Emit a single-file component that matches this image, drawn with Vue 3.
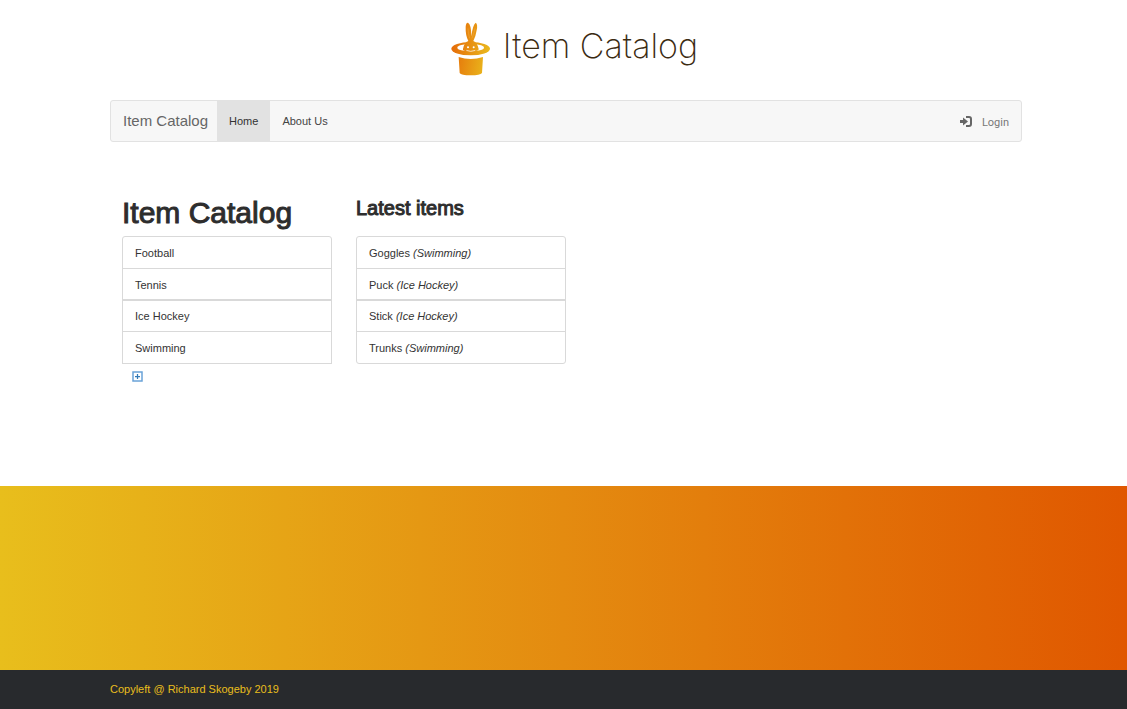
<script setup>
const categories = ['Football', 'Tennis', 'Ice Hockey', 'Swimming']
const latest = [
  { name: 'Goggles', category: 'Swimming' },
  { name: 'Puck', category: 'Ice Hockey' },
  { name: 'Stick', category: 'Ice Hockey' },
  { name: 'Trunks', category: 'Swimming' }
]
</script>

<template>
  <div class="page">
    <header class="masthead">
      <a class="logo" href="#">
        <svg class="logo-mark" viewBox="20 18 120 165" aria-hidden="true">
          <defs>
            <linearGradient id="hat" gradientUnits="userSpaceOnUse" x1="20" y1="90" x2="138" y2="110">
              <stop offset="0" stop-color="#e56a08" />
              <stop offset="1" stop-color="#eabb1d" />
            </linearGradient>
          </defs>
          <ellipse cx="79" cy="101" rx="58" ry="20" fill="url(#hat)" />
          <ellipse cx="79" cy="98" rx="40" ry="11" fill="#fff" />
          <path d="M56 102Q59 83 72 78Q63 60 64 35Q65 22 71 23Q81 28 81 64Q85 30 94 23Q101 27 97 46Q94 66 87 78Q99 83 103 102Q104 105 98 107Q79 113 60 107Q54 105 56 102Z" fill="url(#hat)" />
          <path d="M71 40Q71 54 76 70M92 40Q89 54 83 70" fill="none" stroke="#f6c060" stroke-width="1" />
          <circle cx="71" cy="97" r="3" fill="#fff" />
          <circle cx="88" cy="97" r="3" fill="#fff" />
          <path d="M66 106Q79 112 93 106" fill="none" stroke="#fff" stroke-width="2" />
          <path d="M43 126Q79 138 116 126L113 174Q108 181 79 181Q50 181 46 174Z" fill="url(#hat)" />
        </svg>
        <span class="logo-text">Item Catalog</span>
      </a>
    </header>

    <div class="container">
      <nav class="navbar">
        <a class="brand" href="#">Item Catalog</a>
        <a class="nav-link active" href="#">Home</a>
        <a class="nav-link" href="#">About Us</a>
        <a class="login" href="#">
          <svg class="login-icon" viewBox="0 0 12 12" aria-hidden="true">
            <path d="M0 5H3V2.500L8 6.500L3 10.500V8H0Z" fill="#666" />
            <path d="M6 2H9Q11 2 11 4V9Q11 11 9 11H6" fill="none" stroke="#666" stroke-width="2" />
          </svg>
          <span class="login-text">Login</span>
        </a>
      </nav>

      <main class="content">
        <section class="column">
          <h1>Item Catalog</h1>
          <ul class="list open">
            <li v-for="name in categories" :key="name"><a href="#">{{ name }}</a></li>
          </ul>
          <a class="add" href="#" aria-label="Add category">
            <svg viewBox="0 0 11 11" aria-hidden="true">
              <rect x="1" y="1" width="9" height="9" fill="none" stroke="#6aa3d8" stroke-width="1.500" />
              <path d="M5.500 3V8M3 5.500H8" stroke="#337ab7" stroke-width="1.250" />
            </svg>
          </a>
        </section>
        <section class="column">
          <h2>Latest items</h2>
          <ul class="list">
            <li v-for="item in latest" :key="item.name">
              <a href="#">{{ item.name }} <em>({{ item.category }})</em></a>
            </li>
          </ul>
        </section>
      </main>
    </div>

    <div class="banner"></div>
    <footer class="footer">Copyleft @ Richard Skogeby 2019</footer>
  </div>
</template>

<style>
body {
  margin: 0;
  background: #fff;
}
</style>

<style scoped>
.page {
  font-family: "Liberation Sans", Arial, sans-serif;
  font-size: 11px;
  line-height: 15px;
  color: #333;
}
a {
  color: inherit;
  text-decoration: none;
}
.masthead {
  display: flex;
  justify-content: center;
  height: 79px;
  padding: 21px 0 0 22px;
}
.logo {
  display: flex;
  align-items: flex-start;
  gap: 12px;
}
.logo-mark {
  width: 40px;
  height: 55px;
}
.logo-text {
  font-family: Inter, sans-serif;
  font-size: 34px;
  font-weight: 200;
  line-height: 50px;
  color: #3b2b12;
}
.container {
  padding: 0 105px 0 110px;
}
.navbar {
  display: flex;
  height: 40px;
  border: 1px solid #e2e2e2;
  border-radius: 3px;
  background: #f7f7f7;
  line-height: 40px;
  color: #444;
}
.brand {
  padding: 0 9px 0 12px;
  font-size: 15px;
  color: #666;
}
.nav-link {
  padding: 0 12px;
}
.active {
  background: #e2e2e2;
  color: #333;
}
.login {
  display: flex;
  align-items: center;
  gap: 10px;
  margin-left: auto;
  padding-right: 12px;
  font-family: Roboto, sans-serif;
  color: #777;
}
.login-icon {
  width: 12px;
  height: 12px;
}
.login-text {
  padding-top: 4px;
}
.content {
  display: flex;
  gap: 24px;
  padding: 52px 12px 104px;
}
.column {
  width: 210px;
}
h1,
h2 {
  height: 42px;
  margin: 0;
  font-weight: 400;
  color: #2d2d2d;
  -webkit-text-stroke: 1px #2d2d2d;
}
h1 {
  font-size: 30px;
  line-height: 38px;
}
h2 {
  font-size: 20px;
  line-height: 29px;
}
.list {
  margin: 0;
  padding: 0;
  list-style: none;
}
.list li {
  padding: 9px 12px 7px;
  border: 1px solid #d9d9d9;
}
.list li:nth-child(2) {
  margin-top: -1px;
  padding-bottom: 6px;
}
.list li:nth-child(3) {
  padding-top: 8px;
}
.list li:last-child {
  margin-top: -1px;
}
.list li:first-child {
  border-radius: 3px 3px 0 0;
}
.list:not(.open) li:last-child {
  border-radius: 0 0 3px 3px;
}
.add {
  display: block;
  width: 11px;
  height: 11px;
  margin: 7px 0 0 10px;
}
.add svg {
  display: block;
}
.banner {
  height: 184px;
  background: linear-gradient(to right, #e8be1c, #e48b10 50%, #e05700);
}
.footer {
  padding: 12px 110px;
  background: #282a2d;
  color: #e8be1c;
}
</style>
